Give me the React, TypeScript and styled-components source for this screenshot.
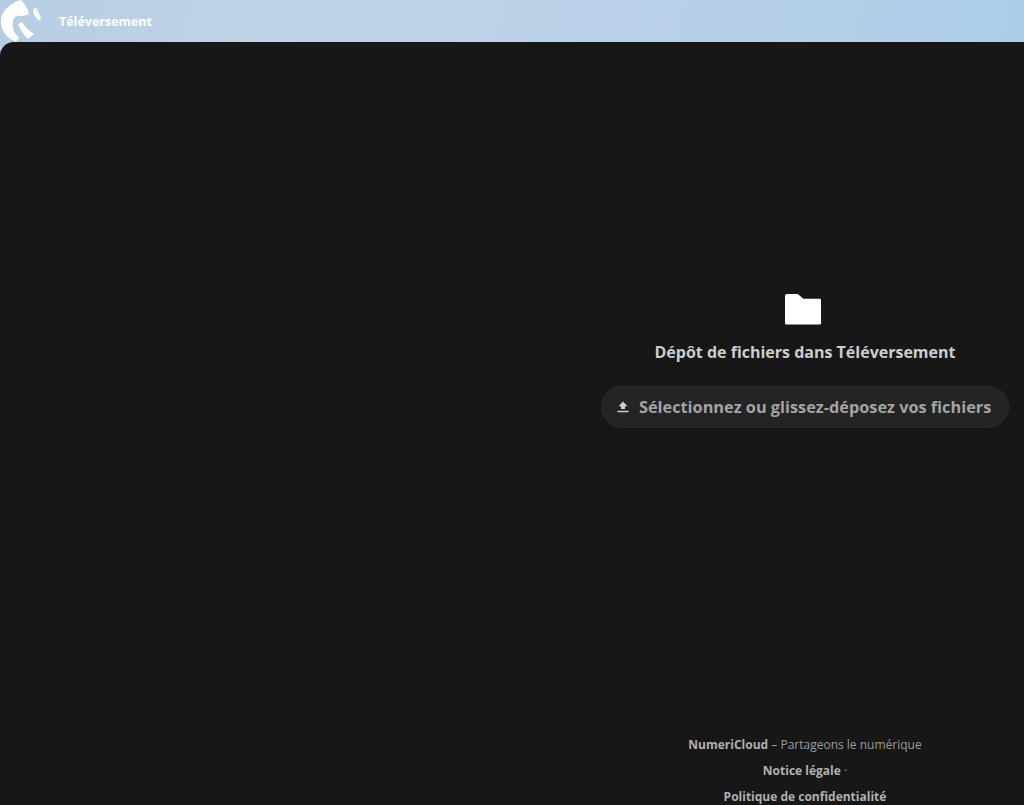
import styled, { createGlobalStyle } from 'styled-components';

const GlobalStyle = createGlobalStyle`
  html, body {
    margin: 0;
    padding: 0;
    height: 100%;
    overflow: hidden;
  }
  body {
    font-family: 'Open Sans', 'Noto Sans', sans-serif;
    background: linear-gradient(100deg, #b5cde3 0%, #bfd3e7 22%, #b8d1e8 55%, #a9cbe6 100%);
  }
  #root {
    height: 100%;
  }
`;

export default function App() {
  return (
    <>
      <GlobalStyle />
      <Page>
        <Header>
          <Logo viewBox="0 0 44 42" aria-hidden="true">
            <path d="M21 0 C13 2 5 8 2 15 C-1 23 2 32 9 38 L16 42 L19 38 C14 33 12 28 13 23 C13 18 16 15 20 16 C23 16 26 15 29 14 C28 9 25 4 21 0 Z" fill="#fff" />
            <path d="M35 7 C38 10 40 15 41 19 L39 21 C36 18 33 14 33 11 Z" fill="#fff" />
            <path d="M18 24 L22 22 C24 26 28 30 34 34 L28 39 C24 35 20 30 18 24 Z" fill="#fff" />
          </Logo>
          <AppName>Téléversement</AppName>
        </Header>
        <Main>
          <Spacer />
          <Content>
            <EmptyState>
              <FolderIcon viewBox="0 0 38 32" aria-hidden="true">
                <path d="M0 3 Q0 0.5 2 0.5 H13 L19 5.5 H36 Q37 5.5 37 7 V31 Q37 32 36 32 H1.5 Q0 32 0 31 Z" fill="#fff" />
              </FolderIcon>
              <Title>Dépôt de fichiers dans Téléversement</Title>
              <UploadButton type="button">
                <UploadIcon viewBox="0 0 12 12" aria-hidden="true">
                  <path d="M6 0.5 L10.5 5.2 H8 V8 H4 V5.2 H1.5 Z M0.5 9.8 H11.5 V11.2 H0.5 Z" fill="#cfcfcf" />
                </UploadIcon>
                Sélectionnez ou glissez-déposez vos fichiers
              </UploadButton>
            </EmptyState>
            <Footer>
              <FooterLine>
                <strong>NumeriCloud</strong> – Partageons le numérique
              </FooterLine>
              <FooterLine>
                <strong>Notice légale</strong> ·
              </FooterLine>
              <FooterLine>
                <strong>Politique de confidentialité</strong>
              </FooterLine>
            </Footer>
          </Content>
        </Main>
      </Page>
    </>
  );
}

const Page = styled.div`
  display: flex;
  flex-direction: column;
  height: 805px;
`;

const Header = styled.header`
  display: flex;
  align-items: center;
  height: 42px;
  flex-shrink: 0;
`;

const Logo = styled.svg`
  width: 44px;
  height: 42px;
  flex-shrink: 0;
`;

const AppName = styled.span`
  margin-left: 15px;
  color: #fff;
  font-size: 12.5px;
  font-weight: 700;
`;

const Main = styled.main`
  flex: 1;
  display: grid;
  grid-template-columns: 586px 1fr;
  background: #171717;
  border-top-left-radius: 14px;
`;

const Spacer = styled.div``;

const Content = styled.div`
  display: flex;
  flex-direction: column;
  align-items: center;
  padding-top: 251px;
`;

const EmptyState = styled.div`
  display: flex;
  flex-direction: column;
  align-items: center;
`;

const FolderIcon = styled.svg`
  width: 37px;
  height: 32px;
  margin-right: 3px;
`;

const Title = styled.h2`
  margin: 15px 0 0;
  color: #cdcdcd;
  font-size: 16px;
  line-height: 24px;
  font-weight: 700;
`;

const UploadButton = styled.button`
  display: flex;
  align-items: center;
  gap: 10px;
  width: 408px;
  height: 42px;
  margin-top: 22px;
  padding: 0 15px;
  border: 1px solid #2b2b2b;
  border-radius: 21px;
  background: #242424;
  color: #a3a3a3;
  font-family: inherit;
  font-size: 16.3px;
  font-weight: 700;
  white-space: nowrap;
`;

const UploadIcon = styled.svg`
  width: 12px;
  height: 12px;
  flex-shrink: 0;
`;

const Footer = styled.footer`
  margin-top: auto;
  margin-bottom: -5px;
  display: flex;
  flex-direction: column;
  align-items: center;
  color: #9c9c9c;
  font-size: 12px;
  line-height: 26px;

  strong {
    color: #b0b0b0;
    font-weight: 700;
  }
`;

const FooterLine = styled.div``;
